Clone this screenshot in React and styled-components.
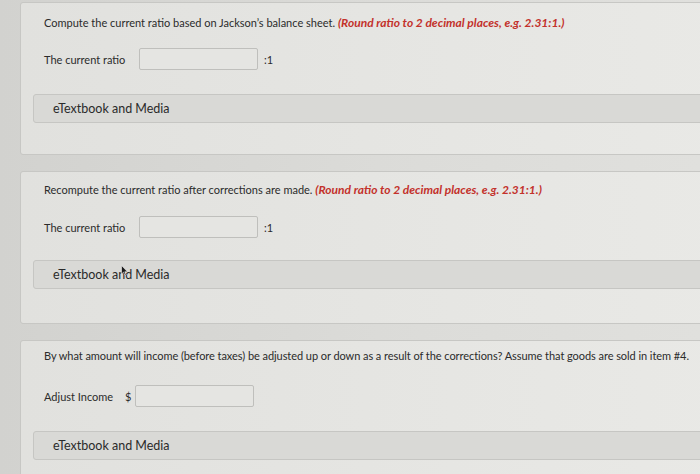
import React from 'react'
import styled, { createGlobalStyle } from 'styled-components'

const GlobalStyle = createGlobalStyle`
  html, body {
    margin: 0;
    padding: 0;
    background: #d4d4d1;
    font-family: Lato, "Open Sans", sans-serif;
    color: #2b2b2b;
    overflow: hidden;
  }
`;

const Page = styled.div`
  width: 700px;
  height: 474px;
  overflow: hidden;
  padding: 2px 0 0 20px;
  box-sizing: border-box;
  background: linear-gradient(90deg, #d2d2cf 0%, #dcdcd9 60%, #e0e0dd 100%);
  display: flex;
  flex-direction: column;
  gap: 16px;
`;

const Card = styled.div`
  position: relative;
  width: 720px;
  height: ${p => p.height}px;
  flex-shrink: 0;
  box-sizing: border-box;
  background: linear-gradient(90deg, #e1e1de 0%, #e6e6e3 60%, #e9e9e6 100%);
  border: 1px solid #c7c7c4;
  border-radius: 3px;
  padding: ${p => p.top}px 0 0 23px;
`;

const Question = styled.div`
  font-size: 11px;
  line-height: 14px;
  letter-spacing: ${p => (p.tight ? '-0.06px' : '0')};
  white-space: nowrap;
`;

const Hint = styled.span`
  color: #c3312b;
  font-weight: 700;
  font-style: italic;
  font-size: 12px;
  letter-spacing: 0;
`;

const Row = styled.div`
  display: flex;
  align-items: center;
  height: 24px;
  margin-top: ${p => p.gap}px;
  font-size: 11px;
`;

const Label = styled.span`
  width: ${p => p.width}px;
  flex-shrink: 0;
`;

const Currency = styled.span`
  width: 10px;
  flex-shrink: 0;
`;

const Input = styled.div`
  width: 119px;
  height: 22px;
  box-sizing: border-box;
  background: #e5e5e2;
  border: 1px solid #bfbfbc;
  border-radius: 2px;
`;

const Suffix = styled.span`
  margin-left: 6px;
`;

const MediaBar = styled.div`
  position: relative;
  margin: ${p => p.gap}px 0 0 -11px;
  height: 29px;
  box-sizing: border-box;
  display: flex;
  align-items: center;
  padding-left: 19px;
  background: #d9d9d6;
  border: 1px solid #c6c6c3;
  border-radius: 3px;
  font-size: 12.5px;
  color: #2a2a2a;
`;

const Cursor = styled.svg`
  position: absolute;
  left: 87px;
  top: 4px;
  width: 7px;
  height: 11px;
`;

function App() {
  return (
    <>
      <GlobalStyle />
      <Page>
        <Card height={153} top={13}>
          <Question>
            Compute the current ratio based on Jackson’s balance sheet.{' '}
            <Hint>(Round ratio to 2 decimal places, e.g. 2.31:1.)</Hint>
          </Question>
          <Row gap={17}>
            <Label width={95}>The current ratio</Label>
            <Input />
            <Suffix>:1</Suffix>
          </Row>
          <MediaBar gap={23}>eTextbook and Media</MediaBar>
        </Card>
        <Card height={153} top={11}>
          <Question>
            Recompute the current ratio after corrections are made.{' '}
            <Hint>(Round ratio to 2 decimal places, e.g. 2.31:1.)</Hint>
          </Question>
          <Row gap={18}>
            <Label width={95}>The current ratio</Label>
            <Input />
            <Suffix>:1</Suffix>
          </Row>
          <MediaBar gap={21}>
            eTextbook and Media
            <Cursor viewBox="0 0 7 11">
              <path d="M0.5 0.5 L0.5 9 L2.5 7.2 L4 10.5 L5.2 10 L3.8 6.8 L6.5 6.8 Z" fill="#1a1a1a" stroke="#f2f2f2" strokeWidth="0.6" />
            </Cursor>
          </MediaBar>
        </Card>
        <Card height={160} top={8}>
          <Question tight>
            By what amount will income (before taxes) be adjusted up or down as a result of the corrections? Assume that goods are sold in item #4.
          </Question>
          <Row gap={21}>
            <Label width={81}>Adjust Income</Label>
            <Currency>$</Currency>
            <Input />
          </Row>
          <MediaBar gap={23}>eTextbook and Media</MediaBar>
        </Card>
      </Page>
    </>
  );
}

export default App
